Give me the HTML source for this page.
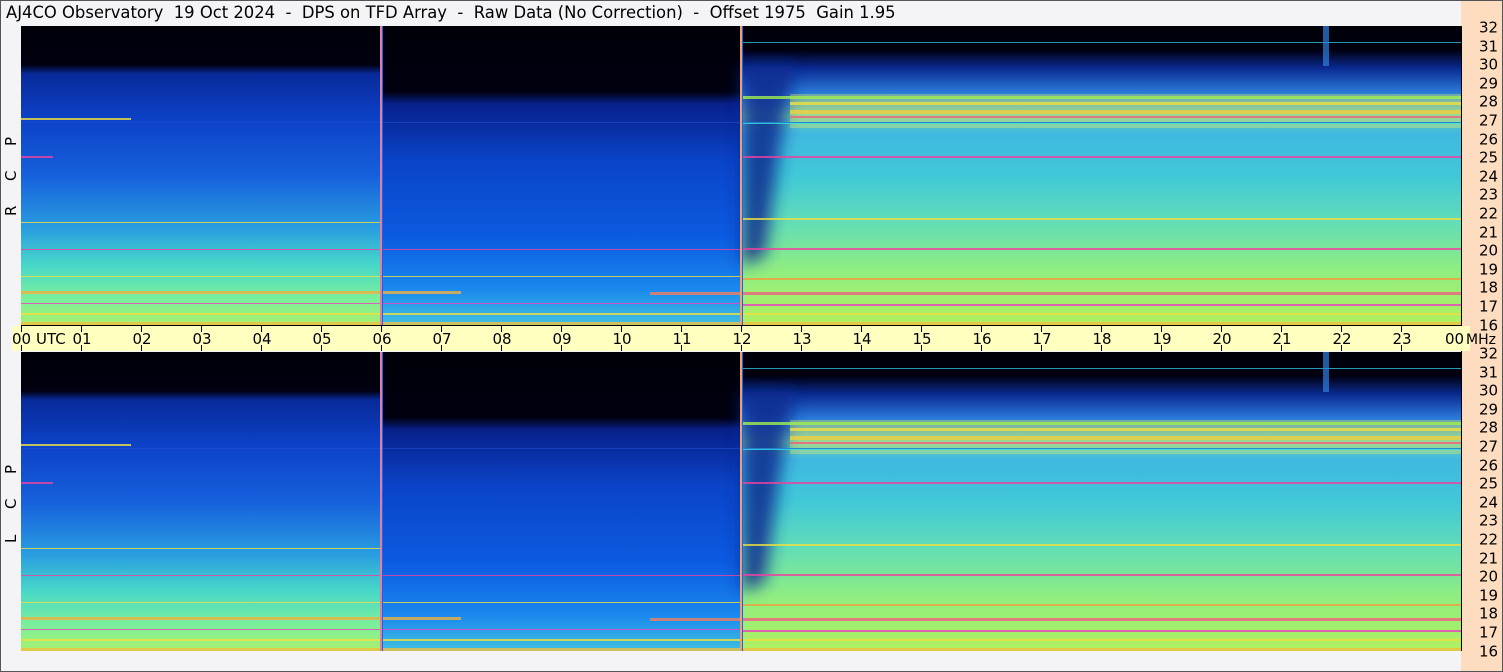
<!DOCTYPE html>
<html><head><style>
html,body{margin:0;padding:0}
body{width:1503px;height:672px;position:relative;background:#f4f4f6;overflow:hidden;font-family:"DejaVu Sans","Liberation Sans",sans-serif;}
.t{position:absolute;left:6px;top:3px;font-size:16.4px;white-space:pre;color:#000;}
.frame{position:absolute;left:0;top:0;width:1501px;height:670px;border:1px solid #555;}
svg{position:absolute;left:0;top:0}
.lab{font-size:15px;fill:#000}
</style></head><body>
<div class="t">AJ4CO Observatory  19 Oct 2024  -  DPS on TFD Array  -  Raw Data (No Correction)  -  Offset 1975  Gain 1.95</div>
<svg width="1503" height="672" xmlns="http://www.w3.org/2000/svg">
<defs>
<filter id="bl" x="-50%" y="-20%" width="200%" height="140%"><feGaussianBlur stdDeviation="8"/></filter>
<linearGradient id="gA" x1="0" y1="0" x2="0" y2="1">
<stop offset="0" stop-color="#000008"/><stop offset="0.13" stop-color="#000010"/>
<stop offset="0.16" stop-color="#082a9a"/><stop offset="0.3" stop-color="#0c40c4"/>
<stop offset="0.5" stop-color="#1660dc"/><stop offset="0.68" stop-color="#2a9ee0"/>
<stop offset="0.8" stop-color="#48d8c8"/><stop offset="0.92" stop-color="#7ef098"/>
<stop offset="1" stop-color="#a8f070"/></linearGradient>
<linearGradient id="gB" x1="0" y1="0" x2="0" y2="1">
<stop offset="0" stop-color="#000008"/><stop offset="0.22" stop-color="#000010"/>
<stop offset="0.26" stop-color="#08208a"/><stop offset="0.45" stop-color="#0a44c8"/>
<stop offset="0.7" stop-color="#0c5ae0"/><stop offset="0.88" stop-color="#1a88ee"/>
<stop offset="1" stop-color="#40c0e0"/></linearGradient>
<linearGradient id="gC" x1="0" y1="0" x2="0" y2="1">
<stop offset="0" stop-color="#000008"/><stop offset="0.08" stop-color="#000010"/>
<stop offset="0.14" stop-color="#0a2a90"/><stop offset="0.22" stop-color="#2a78d8"/>
<stop offset="0.3" stop-color="#70d0b0"/><stop offset="0.36" stop-color="#40b8e0"/>
<stop offset="0.5" stop-color="#40c8d8"/><stop offset="0.65" stop-color="#60dcb8"/>
<stop offset="0.82" stop-color="#90ee80"/><stop offset="1" stop-color="#b0f060"/></linearGradient>
<g id="panel">
<rect x="21" y="0" width="360" height="299" fill="url(#gA)"/>
<rect x="381" y="0" width="360" height="299" fill="url(#gB)"/>
<rect x="741" y="0" width="720" height="299" fill="url(#gC)"/>
<polygon points="742,40 795,40 780,120 765,230 742,240" fill="#0a2a90" opacity="0.85" filter="url(#bl)"/>
<rect x="790" y="68" width="671" height="34" fill="#e8f060" opacity="0.35"/>
<g opacity="0.8">
<rect x="742" y="16" width="719" height="1" fill="#30c0e0"/>
<rect x="742" y="70" width="719" height="3" fill="#a0f050"/>
<rect x="790" y="76" width="671" height="3" fill="#f0e040"/>
<rect x="790" y="84" width="671" height="4" fill="#f0d040"/>
<rect x="790" y="90" width="671" height="2" fill="#f06080"/>
<rect x="742" y="96" width="719" height="2" fill="#30e0e0"/>
<rect x="21" y="92" width="110" height="2" fill="#f0e040"/>
<rect x="21" y="130" width="32" height="2" fill="#f040a0"/>
<rect x="742" y="130" width="719" height="2" fill="#f040a0"/>
<rect x="742" y="192" width="719" height="2" fill="#f0e040"/>
<rect x="21" y="196" width="360" height="1" fill="#f0e040"/>
<rect x="21" y="223" width="720" height="1" fill="#f040a0"/>
<rect x="742" y="222" width="719" height="2" fill="#f040a0"/>
<rect x="21" y="250" width="720" height="1" fill="#f0e040"/>
<rect x="742" y="252" width="719" height="2" fill="#f0a040"/>
<rect x="21" y="265" width="440" height="3" fill="#f0b040"/>
<rect x="650" y="266" width="91" height="3" fill="#f08060"/>
<rect x="742" y="266" width="719" height="3" fill="#f06080"/>
<rect x="21" y="277" width="720" height="1" fill="#f040c0"/>
<rect x="742" y="278" width="719" height="2" fill="#f040c0"/>
<rect x="21" y="287" width="1440" height="2" fill="#f0e040"/>
<rect x="21" y="296" width="1440" height="3" fill="#f0c040"/>
</g>
<rect x="21" y="96" width="1440" height="1" fill="#2050d0" opacity="0.6"/>
<rect x="740" y="0" width="2" height="299" fill="#f0a070"/>
<rect x="742" y="0" width="1" height="299" fill="#2060f0"/>
<rect x="380" y="0" width="2" height="299" fill="#e080a0"/>
<rect x="382" y="0" width="1" height="299" fill="#2060f0"/>
<rect x="1323" y="0" width="6" height="40" fill="#3080e0" opacity="0.7"/>
</g>
</defs>
<use href="#panel" transform="translate(0,26)"/>
<use href="#panel" transform="translate(0,352)"/>
<rect x="12" y="326" width="1458" height="25" fill="#ffffc0"/>
<rect x="21" y="325" width="1440" height="1" fill="#000"/>
<g id="ticks" stroke="#000"></g>
<rect x="1461" y="0" width="42" height="672" fill="#fddcbf"/>
<rect x="1461" y="326" width="9" height="25" fill="#ffffc0"/>
<line x1="1461.5" y1="26" x2="1461.5" y2="326" stroke="#000"/>
<line x1="1461.5" y1="351" x2="1461.5" y2="651" stroke="#000"/>
<g id="ax" class="lab"></g>
<g class="lab" font-size="15">
<text transform="translate(16,146) rotate(-90)">P</text>
<text transform="translate(16,181) rotate(-90)">C</text>
<text transform="translate(16,216) rotate(-90)">R</text>
<text transform="translate(16,474) rotate(-90)">P</text>
<text transform="translate(16,509) rotate(-90)">C</text>
<text transform="translate(16,543) rotate(-90)">L</text>
</g>
<script>
var ns="http://www.w3.org/2000/svg",t=document.getElementById('ticks'),ax=document.getElementById('ax');
function el(n,a,p,txt){var e=document.createElementNS(ns,n);for(var k in a)e.setAttribute(k,a[k]);if(txt!==undefined)e.textContent=txt;p.appendChild(e);return e;}
for(var h=0;h<=24;h++){var x=21+h*60+0.5;
el('line',{x1:x,y1:326,x2:x,y2:332},t);el('line',{x1:x,y1:345,x2:x,y2:351},t);
var lab=(h%24<10?'0':'')+(h%24);var tx=h==0?12:(h==24?1445:x-9);
el('text',{x:tx,y:344,'font-size':15,fill:'#000'},ax,lab);}
el('text',{x:36,y:344,'font-size':15,fill:'#000'},ax,'UTC');
el('text',{x:1466,y:344,'font-size':14,fill:'#000'},ax,'MHz');
[26,352].forEach(function(top){for(var f=16;f<=32;f++){var y=Math.round(top+(32-f)*18.6)+0.5;
el('line',{x1:1461,y1:y,x2:1475,y2:y,stroke:'#000'},t);
el('text',{x:1479,y:y+6,'font-size':15,fill:'#000'},ax,''+f);}});
</script>
</svg>
<div class="frame"></div>
</body></html>
